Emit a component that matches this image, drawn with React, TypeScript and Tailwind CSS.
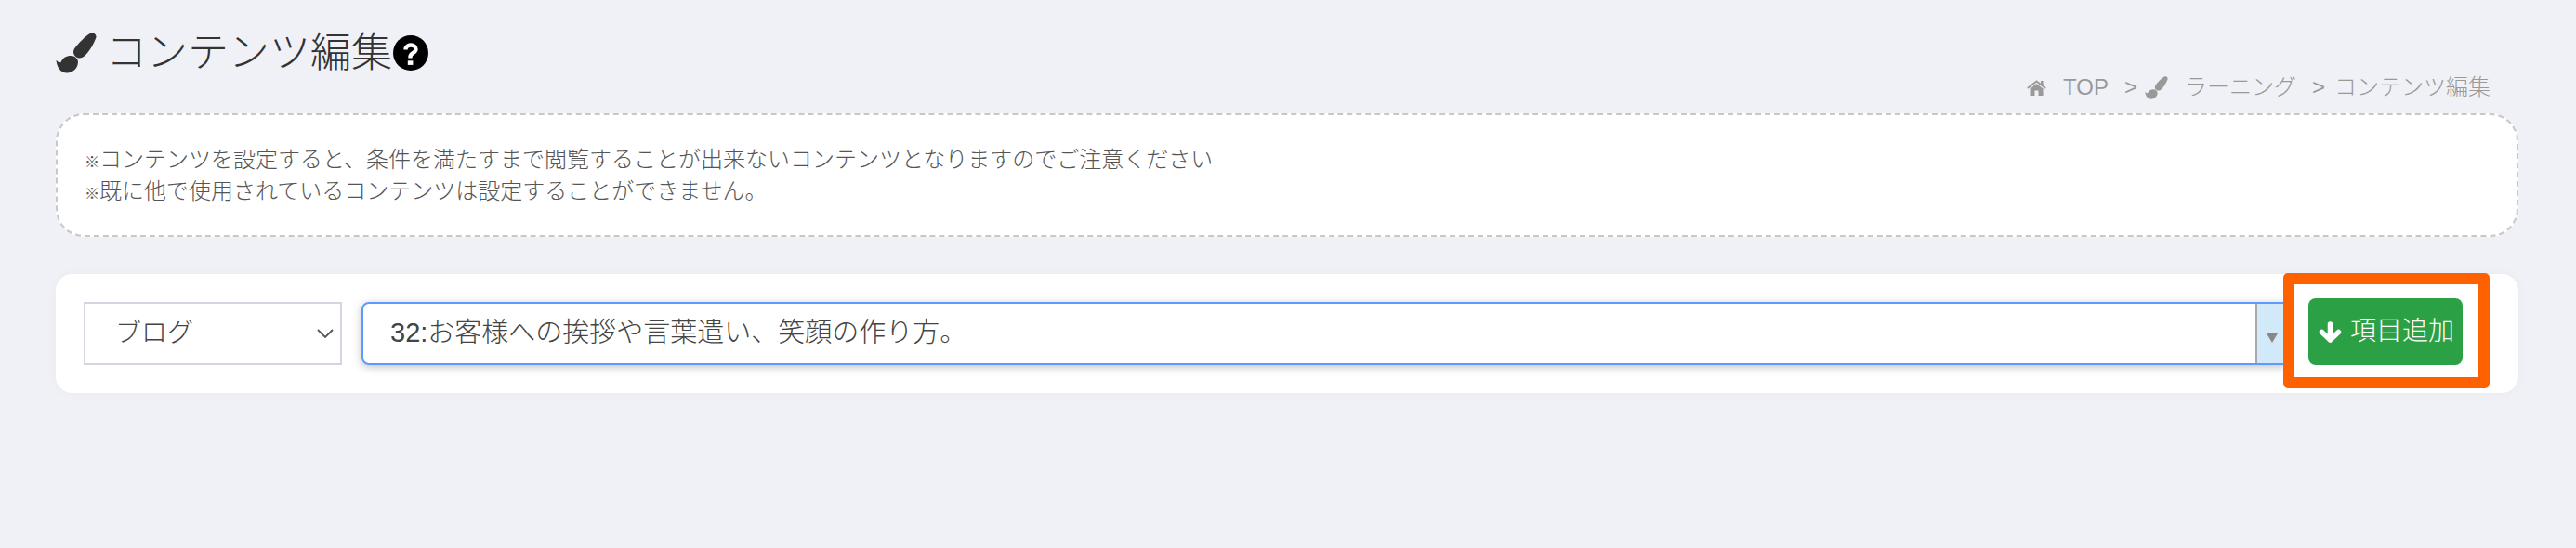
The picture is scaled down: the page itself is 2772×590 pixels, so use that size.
import React from "react";

const font = "font-['Liberation_Sans','Noto_Sans_CJK_JP',sans-serif]";

function Brush({ className }: { className: string }) {
  return (
    <svg viewBox="0 0 44 45" className={className} fill="currentColor">
      <path d="M38 0.5C41-0.5 44 2 44 5C42 11 37 20 32 25C29 28 25 29 22 27C19 25 18 21 20 18C24 12 32 4 38 0.5z" />
      <path d="M0 30.3Q2 33 5 33C7 28 11 25.5 16 25.5C21 25.5 24 29 24 32.5C24 39.5 18 44.5 12 44.5C5 44.5 0.5 38 0 30.3z" />
    </svg>
  );
}

function Help() {
  return (
    <svg viewBox="0 0 38 38" className="ml-px mt-[3px] w-[38px] h-[38px] shrink-0">
      <circle cx="19" cy="19" r="19" fill="#000" />
      <path d="M13.5 15.5C13.5 12.5 16 10.5 19 10.5C22 10.5 24.5 12.5 24.5 15C24.5 19 18.5 19 18.5 23V24.5" fill="none" stroke="#fff" strokeWidth="4.4" />
      <rect x="15.8" y="27.3" width="5.6" height="4.6" fill="#fff" />
    </svg>
  );
}

function Home() {
  return (
    <svg viewBox="0 0 21 17" className="w-[21px] h-[17px] mr-[18px]" fill="currentColor">
      <path d="M3.5 9.5L10.5 4L17.5 9.5V17H12.5V11.5H8.5V17H3.5z" />
      <path d="M0.8 9L10.5 1.5L20.2 9" fill="none" stroke="currentColor" strokeWidth="1.8" />
      <rect x="15" y="1" width="2.6" height="4.5" />
    </svg>
  );
}

export default function App() {
  return (
    <div className={`w-full h-[590px] overflow-hidden bg-[#f0f1f6] pl-[60px] pr-[62px] ${font}`}>
      <header className="h-[122px] flex justify-between">
        <div className="flex items-start pt-[35px] h-[87px]">
          <Brush className="w-[44px] h-[44px] text-[#333]" />
          <h1 className="ml-[10px] text-[44px] leading-[44px] font-light text-[#333] whitespace-nowrap">コンテンツ編集</h1>
          <Help />
        </div>
        <nav className="self-end pb-[14px] pr-[30px] flex items-center text-[24px] leading-[28px] font-light text-[#999] whitespace-nowrap">
          <Home />
          <span>TOP</span>
          <span className="ml-[17px]">&gt;</span>
          <Brush className="ml-[8px] w-[25px] h-[25px]" />
          <span className="ml-[18px]">ラーニング</span>
          <span className="ml-[17px]">&gt;</span>
          <span className="ml-[10px]">コンテンツ編集</span>
        </nav>
      </header>

      <section className="h-[133px] bg-white rounded-[30px] border-2 border-dashed border-[#c8c8c8] pl-[29px] pt-[31px] text-[24px] leading-[34px] font-light text-[#555]">
        <p><span className="text-[16px] leading-none">※</span>コンテンツを設定すると、条件を満たすまで閲覧することが出来ないコンテンツとなりますのでご注意ください</p>
        <p><span className="text-[16px] leading-none">※</span>既に他で使用されているコンテンツは設定することができません。</p>
      </section>

      <section className="mt-[40px] h-[128px] bg-white rounded-[18px] shadow-[0_0_12px_rgba(0,0,20,0.03)] flex items-center pl-[30px] pr-[60px]">
        <div className="w-[278px] h-[68px] border-2 border-[#d3d6e0] flex items-center justify-between pl-[32px] pr-[7px] text-[28px] font-light text-[#444]">
          <span>ブログ</span>
          <svg width="18" height="10" viewBox="0 0 18 10" fill="none" stroke="#555" strokeWidth="1.8">
            <path d="M1 1l8 8 8-8" />
          </svg>
        </div>
        <div className="ml-[21px] flex-1 h-[68px] rounded-l-[8px] border-2 border-[#5b9bff] shadow-[0_2px_10px_rgba(0,0,0,0.25)] flex items-stretch bg-white">
          <div className="flex-1 flex items-center pl-[29px] text-[29px] font-light text-[#444] whitespace-nowrap">32:お客様への挨拶や言葉遣い、笑顔の作り方。</div>
          <div className="w-[31px] border-l-2 border-[#a9a9a9] bg-[#d2e9f9] flex items-center pl-[10px] pt-[10px]">
            <svg width="12" height="10" viewBox="0 0 12 10"><path d="M0 0h12L6 10z" fill="#888" /></svg>
          </div>
        </div>
        <div className="relative ml-[24px] self-start mt-[26px]">
          <button className="w-[166px] h-[72px] rounded-[8px] bg-[#2ca045] text-white flex items-center pl-[11px] text-[28px] font-light whitespace-nowrap">
            <svg viewBox="0 0 25 23" className="w-[25px] h-[23px] mr-[9px]" fill="none" stroke="currentColor" strokeWidth="5.5" strokeLinecap="round" strokeLinejoin="round">
              <path d="M12.5 3V19M3.5 11.5L12.5 20L21.5 11.5" />
            </svg>
            項目追加
          </button>
          <div className="absolute -left-[27px] -right-[29px] -top-[27px] -bottom-[25px] border-[12px] border-[#ff6000] rounded-[5px]" />
        </div>
      </section>
    </div>
  );
}
